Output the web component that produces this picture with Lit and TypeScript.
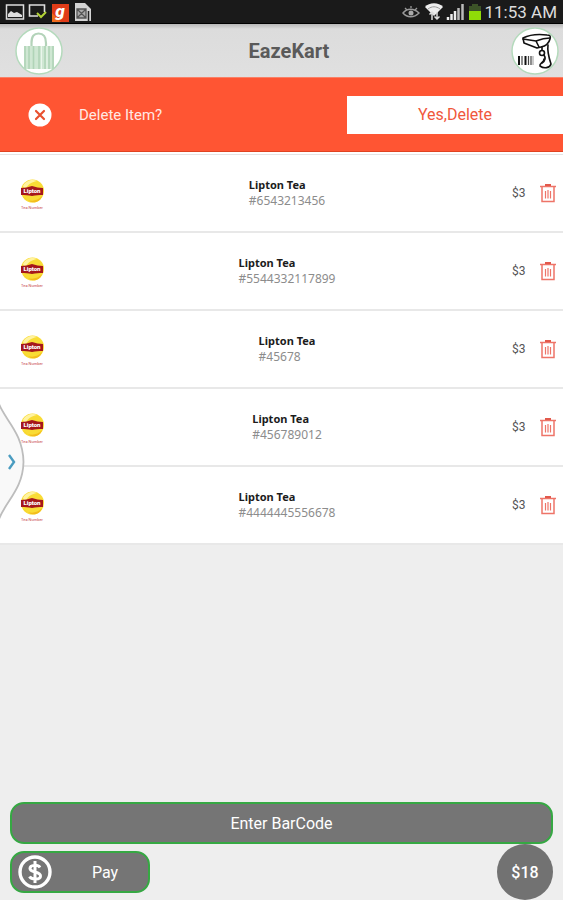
import { LitElement, html, css, svg } from "lit";
import { customElement, state } from "lit/decorators.js";

interface Item {
  name: string;
  code: string;
  price: number;
}

const bagIcon = svg`<svg class="round-art" viewBox="0 0 48 48" aria-hidden="true">
  <circle cx="24" cy="24" r="23" fill="#fff" stroke="#b4dabc" stroke-width="1.5"/>
  <path d="M16.500 20V16C16.500 9 19 6.500 23.500 6.500S31 9 31 16V20" fill="none" stroke="#b3d3b9" stroke-width="2.200"/>
  <rect x="9" y="19" width="30" height="23" fill="#cfe7d3"/>
  <path d="M10 19V42M14 19V42M18.500 19V42M24 19V42M30 19V42M34 19V42M38 19V42" stroke="#b0d4b7" stroke-width="1.600"/>
  <path d="M26.500 19V42M32 19V42" stroke="#eaf6ec" stroke-width="1"/>
</svg>`;

const scannerIcon = svg`<svg class="round-art" viewBox="0 0 48 48" aria-hidden="true">
  <circle cx="24" cy="24" r="23" fill="#fff" stroke="#b4dabc" stroke-width="1.5"/>
  <g fill="none" stroke="#111" stroke-width="1.600" stroke-linejoin="round" stroke-linecap="round">
    <path d="M12 11C18 8 28 7 36 8C39 8 40 9 39 12C38 16 35 19 30 20L26 21L13 16Z"/>
    <path d="M12 12L25 14L28 20M25 14C30 12 35 11 39 11"/>
    <path d="M37 18C36 25 38 31 40 37C39 41 33 42 29 39C28 36 33 36 33 32"/>
    <path d="M31 20V23"/>
    <circle cx="31" cy="26" r="2.500"/>
    <path d="M33 28C35 31 34 34 31 36"/>
  </g>
  <path d="M8 29V38M14.500 29V38" stroke="#111" stroke-width="2"/>
  <path d="M11 29V38M17.500 29V38M20 29V38" stroke="#444" stroke-width="1.200"/>
  <path d="M22 29V38" stroke="#999" stroke-width="1"/>
</svg>`;

const teaLogo = svg`<svg class="logo" viewBox="0 0 24 32" role="img" aria-label="Lipton">
  <circle cx="12.500" cy="12" r="11.500" fill="#f9dc35"/>
  <path d="M3 7C6 1 13 0 17 2C11 3 7 6 5 11Z" fill="#fff3a0"/>
  <path d="M3 18C8 23 17 23 22 17C20 23 15 24 11 23Z" fill="#f3bd1c"/>
  <path d="M1 9C5 9 8 8 12 7C16 8 19 9 23 9V16C19 16 16 16 12 17C8 16 5 16 1 16Z" fill="#a5171c"/>
  <text x="12" y="14" text-anchor="middle" font-family="Roboto, sans-serif" font-weight="900" font-size="6" fill="#fff">Lipton</text>
  <text x="12" y="30" text-anchor="middle" font-family="Roboto, sans-serif" font-size="4" fill="#c8454c">Tea Number</text>
</svg>`;

const trashIcon = svg`<svg class="trash-art" viewBox="0 0 16 20" aria-hidden="true">
  <g fill="none" stroke="#ee7468" stroke-width="1.500">
    <path d="M0 3.500H16M2 4V18.500H14V4"/>
    <path d="M5.500 8V15.500M8 7V15.500M10.500 8V15.500" stroke-width="1.200"/>
  </g>
  <path d="M5 3V1H11V3Z" fill="#e2594c"/>
</svg>`;

const statusLeft = svg`<svg class="status-left" viewBox="0 0 92 24" aria-hidden="true">
  <rect x="6.500" y="5" width="17" height="14" fill="none" stroke="#ddd" stroke-width="1.500"/>
  <path d="M8 17V14L11 11L14 13L17 12L22 15V17Z" fill="#ddd"/>
  <path d="M38 16H29.500V5H44.500V12" fill="none" stroke="#ddd" stroke-width="1.600"/>
  <path d="M37 13L41 17L46 12" fill="none" stroke="#b2d235" stroke-width="2"/>
  <rect x="52" y="4" width="17" height="18" fill="#e03c18"/>
  <path d="M52 22V13L61 22Z" fill="#f06a1c"/>
  <text x="60" y="17" text-anchor="middle" font-family="Roboto, sans-serif" font-weight="900" font-style="italic" font-size="17" fill="#fff">g</text>
  <path d="M75 3H85L91 9V21H75Z" fill="#d4d4d4"/>
  <path d="M77 9H86V18H77ZM77 9L86 18M86 9L77 18" fill="#aaa" stroke="#555" stroke-width="1.300"/>
  <path d="M88.500 11V21" stroke="#222" stroke-width="1.500"/>
</svg>`;

const statusRight = svg`<svg class="status-right" viewBox="0 0 80 24" aria-hidden="true">
  <path d="M2 13C6 8 13 8 18 13C13 18 6 18 2 13Z" fill="none" stroke="#999" stroke-width="1.500"/>
  <circle cx="10" cy="13" r="2.500" fill="#aaa"/>
  <path d="M4 8L6 10M10 6V8M16 8L14 10" stroke="#999" stroke-width="1.300"/>
  <path d="M24 7C28 2 38 2 42 7L33 16Z" fill="#eee"/>
  <path d="M27 9C31 6 35 6 39 9" stroke="#999" fill="none"/>
  <path d="M31 20V12M28.500 14.500L31 12L33.500 14.500M36 12V19M33.500 16.500L36 19L38.500 16.500" stroke="#ddd" fill="none" stroke-width="1.500"/>
  <path d="M47 20V17M50.500 20V14M54 20V11" stroke="#eee" stroke-width="2.500"/>
  <path d="M57.500 20V8M61.500 20V4" stroke="#bbb" stroke-width="2.500"/>
  <path d="M71 4H77V6H80V12H68V6H71Z" fill="#3c5328"/>
  <rect x="68" y="11" width="12" height="9" fill="#8fdc08"/>
</svg>`;

@customElement("app-root")
export class AppRoot extends LitElement {
  @state() private items: Item[] = [
    { name: "Lipton Tea", code: "#6543213456", price: 3 },
    { name: "Lipton Tea", code: "#5544332117899", price: 3 },
    { name: "Lipton Tea", code: "#45678", price: 3 },
    { name: "Lipton Tea", code: "#456789012", price: 3 },
    { name: "Lipton Tea", code: "#4444445556678", price: 3 },
  ];

  static styles = css`
    :host {
      display: flex;
      flex-direction: column;
      min-height: 100vh;
      background: #eee;
      font-family: Roboto, "Liberation Sans", sans-serif;
      color: #222;
    }
    * {
      box-sizing: border-box;
    }
    svg {
      display: block;
      flex: none;
    }
    button {
      font: inherit;
      margin: 0;
      padding: 0;
      border: 0;
      background: none;
      color: inherit;
      cursor: pointer;
    }
    .status {
      display: flex;
      align-items: center;
      height: 24px;
      padding-right: 6px;
      background: #1a1a1a;
      color: #ddd;
      font-size: 17px;
      line-height: 24px;
      border-bottom: 1px solid #000;
    }
    .status-left {
      width: 92px;
      height: 24px;
      margin-right: auto;
    }
    .status-right {
      width: 80px;
      height: 24px;
      margin-right: 4px;
    }
    .header {
      display: grid;
      grid-template-columns: 48px 1fr 48px;
      align-items: center;
      height: 53px;
      padding: 0 4px 0 15px;
      background: linear-gradient(#b8b8b8, #dcdcdc 5px, #e0e0e0);
    }
    .round-art {
      width: 48px;
      height: 48px;
    }
    .title {
      margin: 0;
      padding-left: 4px;
      text-align: center;
      font-size: 20px;
      line-height: 24px;
      font-weight: 700;
      color: #5a5a5a;
    }
    .confirm {
      display: flex;
      align-items: center;
      height: 75px;
      padding-left: 28px;
      background: #ff5533;
      border-top: 1px solid #f98066;
      border-bottom: 1px solid #e04421;
      color: #fff;
      font-size: 16px;
      line-height: 20px;
    }
    .close-art {
      width: 24px;
      height: 24px;
    }
    .question {
      flex: 1;
      margin: 0 0 0 27px;
      font-size: 15px;
      color: #ffe9e4;
    }
    .yes {
      width: 216px;
      height: 38px;
      background: #fff;
      color: #f0583c;
    }
    .list-wrap {
      position: relative;
      background: #fff;
      padding-top: 2px;
    }
    .list {
      list-style: none;
      margin: 0;
      padding: 0;
      border-top: 1px solid #e4e4e4;
    }
    .row {
      display: grid;
      grid-template-columns: 65px 1fr 54px;
      align-items: center;
      height: 78px;
      border-bottom: 2px solid #e8e8e8;
    }
    .logo {
      width: 24px;
      height: 32px;
      margin: 4px 0 0 20px;
    }
    .info {
      justify-self: center;
      line-height: 16px;
      font-family: "Noto Sans", Roboto, sans-serif;
      font-size: 12px;
    }
    .name {
      font-size: 11px;
      font-weight: 700;
      color: #1c1c1c;
    }
    .code {
      color: #8c8c8c;
    }
    .end {
      display: flex;
      align-items: center;
      justify-content: space-between;
      padding: 0 7px 0 3px;
      font-size: 12px;
      color: #555;
    }
    .trash-art {
      width: 16px;
      height: 20px;
    }
    .drawer {
      position: absolute;
      left: 0;
      bottom: 24px;
    }
    .drawer-art {
      width: 25px;
      height: 120px;
    }
    .footer {
      margin-top: auto;
      padding: 0 10px;
      color: #fff;
      font-size: 16px;
    }
    .enter,
    .pay {
      height: 42px;
      border: 2px solid #36a843;
      border-radius: 14px;
      background: #757575;
    }
    .enter {
      display: block;
      width: 100%;
    }
    .bottom {
      display: flex;
      align-items: center;
      justify-content: space-between;
    }
    .pay {
      display: flex;
      align-items: center;
      width: 140px;
      padding-left: 6px;
    }
    .pay-art {
      width: 34px;
      height: 34px;
    }
    .pay-label {
      flex: 1;
      padding-left: 10px;
    }
    .total {
      display: flex;
      align-items: center;
      justify-content: center;
      width: 56px;
      height: 56px;
      border-radius: 50%;
      background: #727272;
      font-weight: 500;
    }
  `;

  private remove(item: Item) {
    this.items = this.items.filter((i) => i !== item);
  }

  render() {
    return html`
      <div class="status">${statusLeft}${statusRight}<span>11:53 AM</span></div>
      <header class="header">
        <button aria-label="Cart">${bagIcon}</button>
        <h1 class="title">EazeKart</h1>
        <button aria-label="Scan">${scannerIcon}</button>
      </header>
      <section class="confirm">
        <button aria-label="Cancel">
          <svg class="close-art" viewBox="0 0 24 24" aria-hidden="true">
            <circle cx="12" cy="12" r="11.5" fill="#fff" />
            <path d="M8 8L16 16M16 8L8 16" stroke="#e8502f" stroke-width="2.2" stroke-linecap="round" />
          </svg>
        </button>
        <p class="question">Delete Item?</p>
        <button class="yes">Yes,Delete</button>
      </section>
      <div class="list-wrap">
        <ul class="list">
          ${this.items.map(
            (item) => html`<li class="row">
              ${teaLogo}
              <div class="info">
                <div class="name">${item.name}</div>
                <div class="code">${item.code}</div>
              </div>
              <div class="end">
                <span>$${item.price}</span>
                <button aria-label="Delete ${item.code}" @click=${() => this.remove(item)}>${trashIcon}</button>
              </div>
            </li>`
          )}
        </ul>
        <button class="drawer" aria-label="Open drawer">
          <svg class="drawer-art" viewBox="0 0 25 120" aria-hidden="true">
            <path d="M-1 3C5 19 23 32 23.500 61C23 88 6 100 -1 118Z" fill="#f9f9f9" stroke="#bdbdbd" stroke-width="1.8" />
            <path d="M9 54L14 61L9 68" fill="none" stroke="#4a9cc0" stroke-width="2.4" />
          </svg>
        </button>
      </div>
      <footer class="footer">
        <button class="enter">Enter BarCode</button>
        <div class="bottom">
          <button class="pay">
            <svg class="pay-art" viewBox="0 0 34 34" aria-hidden="true">
              <circle cx="17" cy="17" r="15" fill="none" stroke="#fff" stroke-width="3.4" />
              <path d="M22 12.500C20 9.500 12 9.500 12 13.500C12 18 22.500 16 22.500 21C22.500 25 13.500 25 11.500 21.500M17 6V28" fill="none" stroke="#fff" stroke-width="3" />
            </svg>
            <span class="pay-label">Pay</span>
          </button>
          <div class="total">$18</div>
        </div>
      </footer>
    `;
  }
}
